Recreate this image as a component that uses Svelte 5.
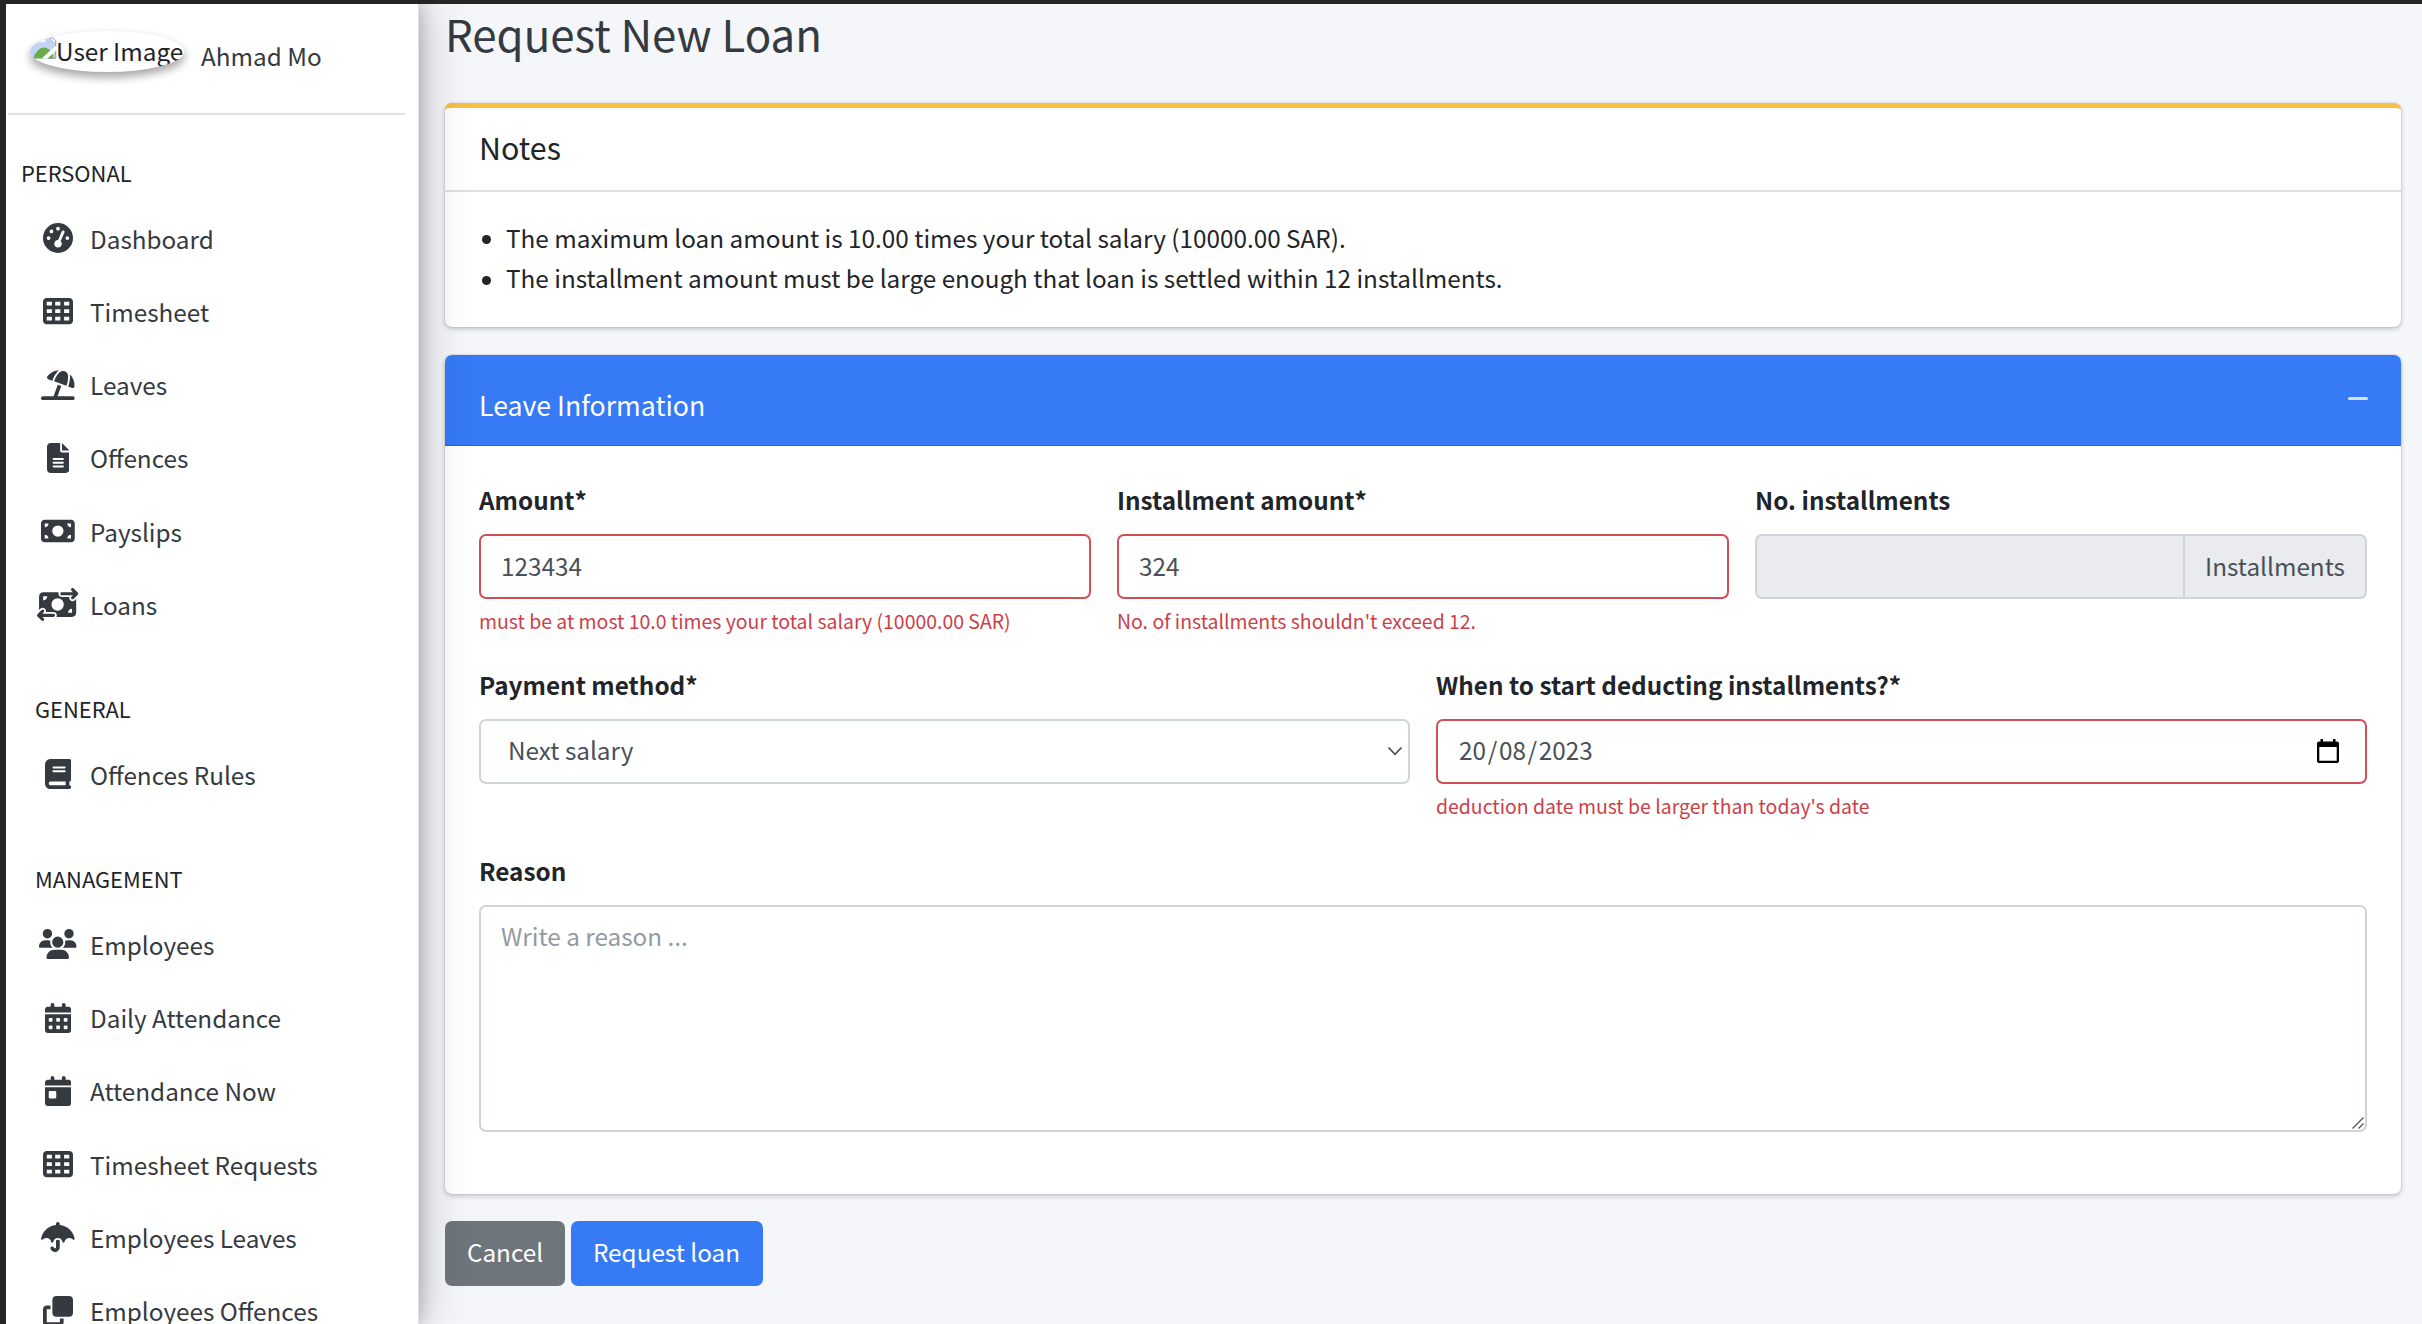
<script>
  const calTop =
    'M128 0c17.7 0 32 14.3 32 32V64H288V32c0-17.7 14.3-32 32-32s32 14.3 32 32V64h48c26.5 0 48 21.5 48 48v48H0V112C0 85.5 21.5 64 48 64H96V32c0-17.7 14.3-32 32-32zM0 192H448V464c0 26.5-21.5 48-48 48H48c-26.5 0-48-21.5-48-48V192z';
  const dot = (x, y) =>
    `M${x} ${y}v32c0 8.8 7.2 16 16 16h32c8.8 0 16-7.2 16-16v-32c0-8.8-7.2-16-16-16h-32c-8.8 0-16 7.2-16 16z`;

  const icons = {
    gauge: { w: 512, d: 'M0 256a256 256 0 1 1 512 0A256 256 0 1 1 0 256zM288 96a32 32 0 1 0 -64 0 32 32 0 1 0 64 0zM256 416c35.3 0 64-28.7 64-64c0-17.4-6.9-33.1-18.1-44.6L366 161.7c5.3-12.1-.2-26.3-12.3-31.6s-26.3 .2-31.6 12.3L257.9 288c-.6 0-1.3 0-1.9 0c-35.3 0-64 28.7-64 64s28.7 64 64 64zM176 144a32 32 0 1 0 -64 0 32 32 0 1 0 64 0zM96 288a32 32 0 1 0 0-64 32 32 0 1 0 0 64zm352-32a32 32 0 1 0 -64 0 32 32 0 1 0 64 0z' },
    table: { w: 512, d: 'M64 32C28.7 32 0 60.7 0 96V416c0 35.3 28.7 64 64 64H448c35.3 0 64-28.7 64-64V96c0-35.3-28.7-64-64-64H64zm88 64v64H64V96h88zm56 0h88v64H208V96zm240 0v64H360V96h88zM64 224h88v64H64V224zm232 0v64H208V224h88zm64 0h88v64H360V224zM152 352v64H64V352h88zm56 0h88v64H208V352zm240 0v64H360V352h88z' },
    beach: { w: 576, d: 'M346.3 271.8l-60.1-21.9L214 448H32c-17.7 0-32 14.3-32 32s14.3 32 32 32H544c17.7 0 32-14.3 32-32s-14.3-32-32-32H282.1l64.1-176.2zm121.1-.2l-3.3 9.1 67.7 24.6c18.1 6.6 38-4.2 39.6-23.4c6.5-78.5-23.9-155.5-80.8-208.5c2 8 3.2 16.3 3.4 24.8l.2 6c1.8 57-7.3 113.8-26.8 167.4zM462 99.1c-1.1-34.4-22.5-64.8-54.4-77.4c-.9-.4-1.9-.7-2.8-1.1c-33-11.7-69.8-2.4-93.1 23.8l-4 4.5C272.4 88.3 245 134.2 226.8 184l-3.3 9.1L434 269.7l3.3-9.1c18.1-49.8 26.6-102.5 24.9-155.5l-.2-6zM107.2 112.9c-11.1 15.7-2.8 36.8 15.3 43.4l71 25.8 3.3-9.1c19.5-53.6 49.1-103 87.1-145.5l4-4.5c6.2-6.9 13.1-13 20.5-18.2c-79.6 2.5-154.7 42.2-201.2 108z' },
    file: { w: 384, d: 'M64 0C28.7 0 0 28.7 0 64V448c0 35.3 28.7 64 64 64H320c35.3 0 64-28.7 64-64V160H256c-17.7 0-32-14.3-32-32V0H64zM256 0V128H384L256 0zM112 256H272c8.8 0 16 7.2 16 16s-7.2 16-16 16H112c-8.8 0-16-7.2-16-16s7.2-16 16-16zm0 64H272c8.8 0 16 7.2 16 16s-7.2 16-16 16H112c-8.8 0-16-7.2-16-16s7.2-16 16-16zm0 64H272c8.8 0 16 7.2 16 16s-7.2 16-16 16H112c-8.8 0-16-7.2-16-16s7.2-16 16-16z' },
    bill: { w: 576, d: 'M64 64C28.7 64 0 92.7 0 128V384c0 35.3 28.7 64 64 64H512c35.3 0 64-28.7 64-64V128c0-35.3-28.7-64-64-64H64zm64 320H64V320c35.3 0 64 28.7 64 64zM64 192V128h64c0 35.3-28.7 64-64 64zM448 384c0-35.3 28.7-64 64-64v64H448zm64-192c-35.3 0-64-28.7-64-64h64v64zM288 160a96 96 0 1 1 0 192 96 96 0 1 1 0-192z' },
    transfer: { w: 640, big: true, d: 'M535 41c-9.4-9.4-9.4-24.6 0-33.9s24.6-9.4 33.9 0l64 64c4.5 4.5 7 10.6 7 17s-2.5 12.5-7 17l-64 64c-9.4 9.4-24.6 9.4-33.9 0s-9.4-24.6 0-33.9l23-23L384 112c-13.3 0-24-10.7-24-24s10.7-24 24-24l174.1 0L535 41zM105 377l-23 23L256 400c13.3 0 24 10.7 24 24s-10.7 24-24 24L81.9 448l23 23c9.4 9.4 9.4 24.6 0 33.9s-24.6 9.4-33.9 0L7 441c-4.5-4.5-7-10.6-7-17s2.5-12.5 7-17l64-64c9.4-9.4 24.6-9.4 33.9 0s9.4 24.6 0 33.9zM96 64H337.9c-3.7 7.2-5.9 15.3-5.9 24c0 28.7 23.3 52 52 52l117.4 0c-4 17 .6 35.5 13.8 48.8c20.3 20.3 53.2 20.3 73.5 0L608 169.5V384c0 35.3-28.7 64-64 64H302.1c3.7-7.2 5.9-15.3 5.9-24c0-28.7-23.3-52-52-52l-117.4 0c4-17-.6-35.5-13.8-48.8c-20.3-20.3-53.2-20.3-73.5 0L32 342.5V128c0-35.3 28.7-64 64-64zm64 64H96v64c35.3 0 64-28.7 64-64zM544 320c-35.3 0-64 28.7-64 64h64V320zM320 352a96 96 0 1 0 0-192 96 96 0 1 0 0 192z' },
    book: { w: 448, d: 'M96 0C43 0 0 43 0 96V416c0 53 43 96 96 96H384h32c17.7 0 32-14.3 32-32s-14.3-32-32-32V384c17.7 0 32-14.3 32-32V32c0-17.7-14.3-32-32-32H384 96zm0 384H352v64H96c-17.7 0-32-14.3-32-32s14.3-32 32-32zm32-240c0-8.8 7.2-16 16-16H336c8.8 0 16 7.2 16 16s-7.2 16-16 16H144c-8.8 0-16-7.2-16-16zm16 48H336c8.8 0 16 7.2 16 16s-7.2 16-16 16H144c-8.8 0-16-7.2-16-16s7.2-16 16-16z' },
    users: { w: 640, d: 'M144 0a80 80 0 1 1 0 160A80 80 0 1 1 144 0zM512 0a80 80 0 1 1 0 160A80 80 0 1 1 512 0zM0 298.7C0 239.8 47.8 192 106.7 192h42.7c15.9 0 31 3.5 44.6 9.7c-1.3 7.2-1.9 14.7-1.9 22.3c0 38.2 16.8 72.5 43.3 96c-.2 0-.4 0-.7 0H21.3C9.6 320 0 310.4 0 298.7zM405.3 320c-.2 0-.4 0-.7 0c26.6-23.5 43.3-57.8 43.3-96c0-7.6-.7-15-1.9-22.3c13.6-6.3 28.7-9.7 44.6-9.7h42.7C592.2 192 640 239.8 640 298.7c0 11.8-9.6 21.3-21.3 21.3H405.3zM224 224a96 96 0 1 1 192 0 96 96 0 1 1 -192 0zM128 485.3C128 411.7 187.7 352 261.3 352H378.7C452.3 352 512 411.7 512 485.3c0 14.7-11.9 26.7-26.7 26.7H154.7c-14.7 0-26.7-11.9-26.7-26.7z' },
    days: { w: 448, d: calTop + dot(64, 272) + dot(192, 272) + dot(320, 272) + dot(64, 400) + dot(192, 400) + dot(320, 400) },
    day: { w: 448, d: calTop + 'M80 256c-8.8 0-16 7.2-16 16v96c0 8.8 7.2 16 16 16h96c8.8 0 16-7.2 16-16V272c0-8.8-7.2-16-16-16H80z' },
    umbrella: { w: 576, d: 'M288 0c17.7 0 32 14.3 32 32V49.7C451.8 63.4 557.7 161 573.9 285.9c2 15.6-17.3 24.4-27.8 12.7C532.1 283 504.8 272 480 272c-38.7 0-71 27.5-78.4 64.1c-1.7 8.7-8.7 15.9-17.6 15.9s-15.8-7.2-17.6-15.9C359 299.5 326.7 272 288 272s-71 27.5-78.4 64.1c-1.7 8.7-8.7 15.9-17.6 15.9s-15.8-7.2-17.6-15.9C167 299.5 134.7 272 96 272c-24.8 0-52.1 11-66.1 26.7C19.4 310.4 .1 301.5 2.1 285.9C18.3 161 124.2 63.4 256 49.7V32c0-17.7 14.3-32 32-32zm0 304c12.3 0 23.5 4.6 32 12.2V430.6c0 45-36.5 81.4-81.4 81.4c-30.8 0-59-17.4-72.8-45l-2.3-4.7c-7.9-15.8-1.5-35 14.3-42.9s35-1.5 42.9 14.3l2.3 4.7c3 5.9 9 9.6 15.6 9.6c9.6 0 17.4-7.8 17.4-17.4V316.2c8.5-7.6 19.7-12.2 32-12.2z' },
    clone: { w: 512, d: 'M288 448H64V224h64V160H64c-35.3 0-64 28.7-64 64V448c0 35.3 28.7 64 64 64H288c35.3 0 64-28.7 64-64V384H288v64zm-64-96H448c35.3 0 64-28.7 64-64V64c0-35.3-28.7-64-64-64H224c-35.3 0-64 28.7-64 64V288c0 35.3 28.7 64 64 64z' }
  };

  const groups = [
    { title: 'PERSONAL', items: [['gauge', 'Dashboard'], ['table', 'Timesheet'], ['beach', 'Leaves'], ['file', 'Offences'], ['bill', 'Payslips'], ['transfer', 'Loans']] },
    { title: 'GENERAL', items: [['book', 'Offences Rules']] },
    { title: 'MANAGEMENT', items: [['users', 'Employees'], ['days', 'Daily Attendance'], ['day', 'Attendance Now'], ['table', 'Timesheet Requests'], ['umbrella', 'Employees Leaves'], ['clone', 'Employees Offences']] }
  ];
</script>

<div class="window">
  <aside class="sidebar">
    <div class="user">
      <div class="avatar">
        <svg class="broken" viewBox="0 0 28 22">
          <path d="M0 0H20L27 6V22H0Z" fill="#c3d3f4" />
          <path d="M7 4.500Q8 1.500 11 2 14-.5 16 3 17 5 14 5H8Z" fill="#fff" />
          <path d="M3 22Q8 10.500 14 10.500T24 18V22Z" fill="#6aab48" />
          <path d="M27.500 8L12 22H18L27.500 13.500Z" fill="#fff" />
          <path d="M19.500 .6H24L26.700 3.500V9M26.700 14V21.600H19" fill="none" stroke="#9a9a9a" stroke-width="1" />
        </svg>
        <span>User Image</span>
      </div>
      <span class="name">Ahmad Mo</span>
    </div>
    <nav>
      {#each groups as group, i}
        <section class="group">
          <h6 class:first={i === 0}>{group.title}</h6>
          {#each group.items as [icon, label]}
            <a class="item" href="#top">
              <span class="glyph">
                <svg class:big={icons[icon].big} viewBox="0 0 {icons[icon].w} 512">
                  <path fill-rule="evenodd" d={icons[icon].d} />
                </svg>
              </span>
              <span class="text">{label}</span>
            </a>
          {/each}
        </section>
      {/each}
    </nav>
  </aside>

  <main>
    <h1>Request New Loan</h1>

    <section class="card notes">
      <header>Notes</header>
      <ul>
        <li>The maximum loan amount is 10.00 times your total salary (10000.00 SAR).</li>
        <li>The installment amount must be large enough that loan is settled within 12 installments.</li>
      </ul>
    </section>

    <section class="card form">
      <header>
        <span>Leave Information</span>
        <i class="minus"></i>
      </header>
      <div class="body">
        <div class="row three">
          <div class="field">
            <label for="amount">Amount*</label>
            <input id="amount" class="invalid" value="123434" />
            <small>must be at most 10.0 times your total salary (10000.00 SAR)</small>
          </div>
          <div class="field">
            <label for="inst">Installment amount*</label>
            <input id="inst" class="invalid" value="324" />
            <small>No. of installments shouldn't exceed 12.</small>
          </div>
          <div class="field">
            <label for="count">No. installments</label>
            <div class="addon">
              <input id="count" disabled />
              <span>Installments</span>
            </div>
          </div>
        </div>
        <div class="row two">
          <div class="field">
            <label for="method">Payment method*</label>
            <div class="control" id="method">
              <span>Next salary</span>
              <svg class="chevron" viewBox="0 0 16 10"><path d="M1.5 1.5L8 8.3 14.5 1.5" /></svg>
            </div>
          </div>
          <div class="field">
            <label for="start">When to start deducting installments?*</label>
            <div class="control date invalid" id="start">
              <span>20<b>/</b>08<b>/</b>2023</span>
              <svg class="cal" viewBox="0 0 22 24">
                <path fill-rule="evenodd" d="M3.5 0H6V2.5H16V0H18.5V2.5H19.5A2.3 2.3 0 0 1 22 5V21.5A2.3 2.3 0 0 1 19.5 24H2.5A2.3 2.3 0 0 1 0 21.5V5A2.3 2.3 0 0 1 2.5 2.5H3.500ZM2.300 8V21.700H19.700V8Z" />
              </svg>
            </div>
            <small>deduction date must be larger than today's date</small>
          </div>
        </div>
        <div class="field reason">
          <label for="reason">Reason</label>
          <div class="area">
            <textarea id="reason" placeholder="Write a reason ..."></textarea>
            <svg class="grip" viewBox="0 0 12 12"><path d="M.5 11.500L11.500.5M6.500 11.500L11.500 6.500" /></svg>
          </div>
        </div>
      </div>
    </section>

    <div class="actions">
      <button class="cancel">Cancel</button>
      <button class="submit">Request loan</button>
    </div>
  </main>
</div>

<style>
  :global(body) {
    margin: 0;
    background: #252525;
  }
  .window {
    box-sizing: border-box;
    width: 2422px;
    height: 1324px;
    padding: 4px 0 0 6px;
    overflow: hidden;
    background: #252525;
    display: flex;
    font-family: 'Noto Sans CJK SC', 'Open Sans', sans-serif;
    font-size: 24.3px;
    line-height: 40.7px;
    color: #212529;
  }
  .sidebar {
    position: relative;
    z-index: 2;
    flex: none;
    box-sizing: border-box;
    width: 413px;
    height: 1320px;
    background: #fff;
    border-right: 1px solid #dee2e6;
    box-shadow: 0 0 47px rgba(0, 0, 0, 0.25), 0 0 17px rgba(0, 0, 0, 0.22);
    clip-path: inset(0 -80px 0 0);
  }
  .user {
    box-sizing: border-box;
    height: 111px;
    margin: 0 13px 0 2px;
    padding: 27px 0 0 22px;
    border-bottom: 2px solid #dee0e6;
    display: flex;
    align-items: flex-start;
    gap: 17px;
  }
  .avatar {
    box-sizing: border-box;
    width: 154px;
    height: 40.5px;
    border-radius: 50%;
    overflow: hidden;
    display: flex;
    align-items: flex-start;
    white-space: nowrap;
    color: #1f2327;
    line-height: 39px;
    box-shadow: 0 5px 10px rgba(0, 0, 0, 0.23), 0 5px 10px rgba(0, 0, 0, 0.16);
  }
  .broken {
    flex: none;
    width: 27px;
    height: 22px;
    margin-top: 6px;
  }
  .avatar span {
    margin-left: -1px;
  }
  .name {
    padding-top: 5px;
    color: #343a40;
  }
  .group {
    padding-bottom: 37.500px;
  }
  .group h6 {
    margin: 0;
    padding-left: 29px;
    height: 59px;
    line-height: 59px;
    font-size: 21.900px;
    font-weight: 400;
  }
  .group h6.first {
    padding-left: 15px;
    margin-top: 27.500px;
  }
  .item {
    display: flex;
    align-items: center;
    height: 73.300px;
    padding-left: 30px;
    color: #343a40;
    text-decoration: none;
    white-space: nowrap;
  }
  .glyph {
    width: 44px;
    margin-right: 10px;
    display: flex;
    justify-content: center;
    align-items: center;
  }
  .text {
    padding-top: 1.500px;
  }
  .glyph svg {
    height: 30px;
    flex: none;
    fill: #343a40;
  }
  .glyph svg.big {
    height: 33px;
  }
  main {
    flex: 1;
    box-sizing: border-box;
    padding: 0 21px 0 26px;
    background: #f4f6f9;
  }
  h1 {
    margin: 0;
    height: 99px;
    line-height: 58px;
    font-size: 43.800px;
    font-weight: 400;
    color: #343a40;
  }
  .card {
    border-radius: 7px;
    background: #fff;
    box-shadow: 0 0 2px rgba(0, 0, 0, 0.2), 0 2px 5px rgba(0, 0, 0, 0.2);
    overflow: hidden;
  }
  .notes {
    box-sizing: border-box;
    height: 224px;
    border-top: 5px solid #f5c044;
    margin-bottom: 27.500px;
  }
  .notes header {
    box-sizing: border-box;
    height: 84px;
    padding-left: 34px;
    border-bottom: 2px solid #dfdfdf;
    font-size: 30.400px;
    line-height: 79px;
  }
  ul {
    margin: 0;
    padding: 25.500px 0 0 33px;
    list-style: none;
  }
  li {
    display: flex;
    align-items: center;
    gap: 15px;
    padding-left: 4px;
  }
  li::before {
    content: '';
    width: 9px;
    height: 9px;
    margin-top: 4px;
    border-radius: 50%;
    background: #212529;
  }
  .form {
    height: 839px;
  }
  .form header {
    box-sizing: border-box;
    height: 91px;
    padding: 0 33px 0 34px;
    border-bottom: 1px solid #2665d4;
    background: #367af6;
    color: #fff;
    font-size: 26.700px;
    line-height: 100px;
    display: flex;
    justify-content: space-between;
  }
  .minus {
    width: 20px;
    height: 3px;
    margin-top: 42px;
    border-radius: 2px;
    background: #d3e1fc;
  }
  .body {
    padding: 34px 34px 0;
  }
  .row {
    display: grid;
    gap: 26px;
    height: 185.700px;
  }
  .three {
    grid-template-columns: repeat(3, minmax(0, 1fr));
  }
  .two {
    grid-template-columns: repeat(2, minmax(0, 1fr));
  }
  .field {
    display: flex;
    flex-direction: column;
  }
  label {
    height: 54px;
    line-height: 39.500px;
    font-weight: 700;
  }
  input,
  .control,
  textarea {
    box-sizing: border-box;
    width: 100%;
    height: 65px;
    margin: 0;
    padding: 0 20px 2px;
    border: 2px solid #ced4da;
    border-radius: 7px;
    background: #fff;
    color: #495057;
    font: inherit;
    outline: none;
  }
  input.invalid,
  .control.invalid {
    border-color: #d24e57;
  }
  small {
    margin-top: 3px;
    color: #cc3f49;
    font-size: 19.450px;
    line-height: 38px;
    white-space: nowrap;
  }
  .addon {
    display: flex;
  }
  .addon input {
    width: 428px;
    border-right: 0;
    border-radius: 7px 0 0 7px;
    background: #e9ebef;
  }
  .addon span {
    box-sizing: border-box;
    flex: 1;
    height: 65px;
    border: 2px solid #ced4da;
    border-radius: 0 7px 7px 0;
    background: #e9ebef;
    color: #495057;
    line-height: 59px;
    text-align: center;
  }
  .control {
    display: flex;
    align-items: center;
    justify-content: space-between;
    padding: 0 5px 2px 27px;
  }
  .date {
    padding: 0 26px 2px 21px;
  }
  .date b {
    margin: 0 1.700px;
    font-weight: 400;
  }
  .chevron {
    width: 16px;
    height: 10px;
    fill: none;
    stroke: #495057;
    stroke-width: 1.800;
  }
  .cal {
    width: 22px;
    height: 24px;
    fill: #000;
  }
  .area {
    position: relative;
    height: 227px;
  }
  textarea {
    display: block;
    height: 227px;
    padding: 9px 20px;
    resize: none;
  }
  textarea::placeholder {
    color: #939ba2;
    opacity: 1;
  }
  .grip {
    position: absolute;
    right: 3px;
    bottom: 3px;
    width: 12px;
    height: 12px;
    fill: none;
    stroke: #555;
    stroke-width: 1.300;
  }
  .actions {
    display: flex;
    gap: 5.500px;
    padding-top: 27px;
  }
  button {
    height: 65px;
    border: 0;
    border-radius: 7px;
    color: #fff;
    font: inherit;
    padding: 0 0 2px;
  }
  .cancel {
    width: 120px;
    background: #6f767b;
  }
  .submit {
    width: 192px;
    background: #367af6;
  }
</style>
